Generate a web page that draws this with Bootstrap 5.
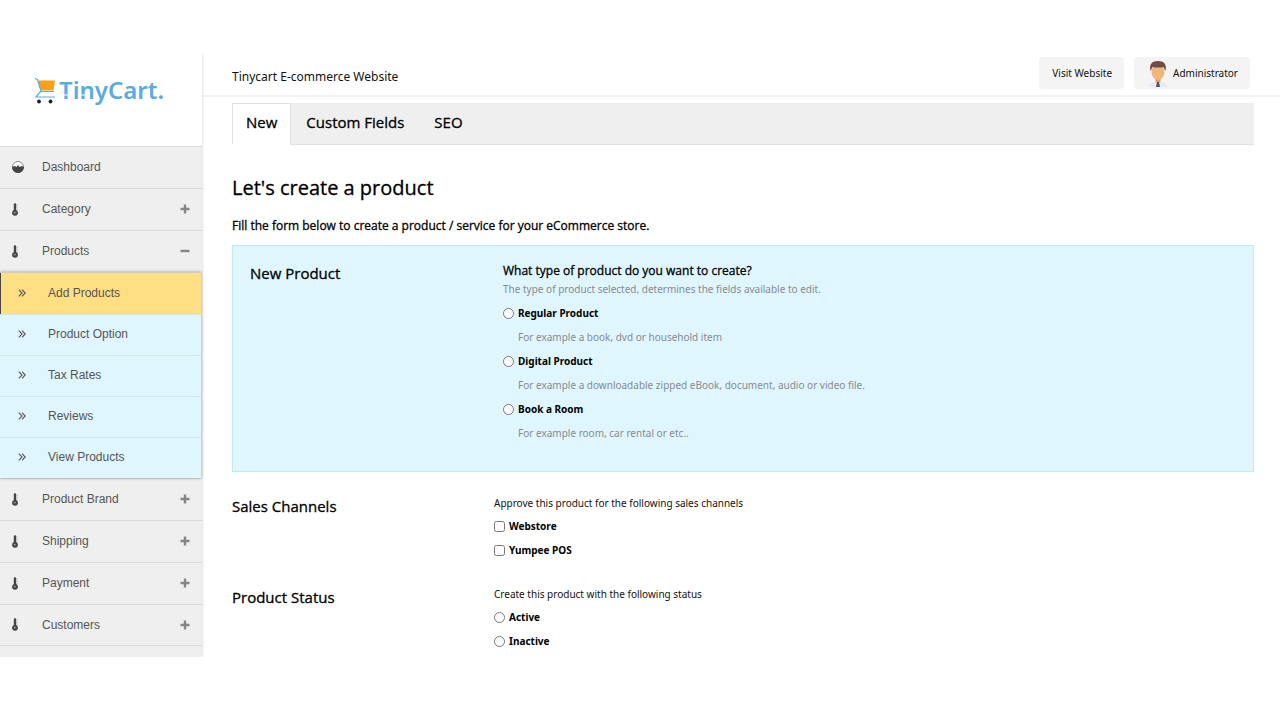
<!DOCTYPE html>
<html lang="en">
<head>
<meta charset="utf-8">
<meta name="viewport" content="width=device-width, initial-scale=1">
<title>Tinycart E-commerce Website</title>
<link href="https://cdn.jsdelivr.net/npm/bootstrap@5.3.0/dist/css/bootstrap.min.css" rel="stylesheet">
<style>
body { font-family: "Noto Sans", "Open Sans", sans-serif; font-size: 10px; line-height: 16px; color: #111; background: #fff; padding: 53px 0 62px; }
.side { width: 202px; flex: none; background: #efefef; font-family: "Liberation Sans", Arial, sans-serif; font-size: 12px; box-shadow: 0 0 3px #ccc; padding-bottom: 11px; clip-path: inset(0 -4px 0 0); }
.brand { height: 93px; background: #fff; padding: 15px 0 0 34px; }
.brand text { font-family: "Noto Sans", sans-serif; font-size: 24px; font-weight: 600; fill: #5aabdf; }
.side a { color: #555; text-decoration: none; }
.entry { height: 42px; border-top: 1px solid #d9d9d9; padding: 0 12px 1px 9px; }
.entry .pic { width: 33px; display: flex; align-items: center; }
.menu-end { border-bottom: 1px solid #d9d9d9; }
.sub { background: #e0f6ff; margin-right: 1px; box-shadow: 0 0 3px #999; position: relative; }
.sub a { height: 41px; border-top: 1px solid #c9e9f3; padding: 0 0 2px 18px; }
.sub a:first-child { border-top-color: #ccc; height: 42px; }
.sub a .pic { width: 30px; display: flex; }
.sub a.now { background: #ffdf84; box-shadow: inset 1px 0 #444; }
.topbar { height: 44px; border-bottom: 2px solid #f3f3f3; padding: 0 30px; font-size: 12px; }
.actions { gap: 10px; }
.btn-soft { background: #f4f4f4; font-size: 10px; line-height: 16px; height: 32px; padding: 0 12px 0 13px; border: 0; border-radius: 4px; color: #111; }
.page-body { padding: 6px 26px 0 30px; }
.tabs { background: #efefef; border-bottom: 1px solid #dee2e6; }
.tabs .nav-link { color: #000; font-size: 15px; line-height: 20px; padding: 8px 14px 12px; border-radius: 0; }
.tabs .nav-link.active { color: #000; padding: 8px 13px 12px; }
h1, h2, .tabs, .lead-in, .ask { font-family: "Open Sans", "Noto Sans", sans-serif; -webkit-text-stroke: .3px; }
h1 { font-size: 20px; font-weight: 400; line-height: 28px; margin: 29px 0 16px; color: #000; }
h2 { font-size: 15px; font-weight: 400; line-height: 22px; margin: 0; color: #000; }
.lead-in { font-size: 12px; line-height: 16px; margin: 0 0 11px; color: #000; }
.panel-new { background: #e0f6ff; border: 1px solid #bfeaf5; padding: 17px 17px 22px; margin-bottom: 3px; }
.panel-new h2 { line-height: 20px; }
.split { display: grid; grid-template-columns: 262px 1fr; }
.panel-new.split { grid-template-columns: 253px 1fr; }
.panel-new p { color: #868b8e; margin: 0 0 8px 15px; }
.panel-new p.tip { margin: 2px 0 8px; }
.ask { font-size: 12px; color: #000; }
.pick { display: flex; align-items: center; gap: 4px; font-weight: 700; color: #000; margin-bottom: 8px; line-height: 16px; }
.pick input { width: 11px; height: 11px; margin: 0; flex: none; }
fieldset { min-width: 0; }
.below { padding-top: 20px; }
.note { margin-bottom: 7px; }
</style>
</head>
<body>
<svg class="d-none">
<symbol id="thermo" viewBox="0 0 12 13"><path d="M6 1.500v8" stroke="#444" stroke-width="2.400" stroke-linecap="round"/><path d="M7.500 2H9M7.500 4.500H9M7.500 7H9" stroke="#bbb" stroke-width=".8"/><circle cx="6" cy="9.800" r="2.900" fill="#444"/><circle cx="5.800" cy="9.600" r=".9" fill="#aaa"/></symbol>
<symbol id="plus" viewBox="0 0 10 10"><path d="M5 .5v9M.5 5h9" stroke="#858585" stroke-width="2.4"/></symbol>
<symbol id="dbl" viewBox="0 0 8 8"><path d="M.8.7 4 4 .8 7.3M4 .7 7.2 4 4 7.3" fill="none" stroke="#555" stroke-width="1.1"/></symbol>
</svg>
<div class="d-flex align-items-stretch">
<nav class="side" aria-label="Main">
<a class="brand d-flex" href="#"><svg width="144" height="46" viewBox="0 -9 144 46"><path d="M4 3.500h17l-1.500 10H6.500z" fill="#f9a01b"/><path d="M1 1.500l2.500 1L7 14l-5 6h19M6.500 14.500H20" fill="none" stroke="#5aabdf" stroke-width="1.200"/><circle cx="5" cy="24.500" r="1.900" fill="#222"/><circle cx="16.500" cy="24.500" r="1.900" fill="#222"/><text x="25" y="22">TinyCart.</text><path d="M29 18h6M46 18h5" stroke="#fff" stroke-width="1.200"/></svg></a>
<a class="entry d-flex align-items-center" href="#"><span class="pic"><svg width="18" height="14" viewBox="0 0 18 14"><circle cx="9" cy="7" r="5.500" fill="#fff" stroke="#888"/><path d="M3 7l3-1 1.500 1L9 5l1.500 2 2-1L15 7a6 6 0 0 1-12 0z" fill="#444"/></svg></span>Dashboard</a>
<a class="entry d-flex align-items-center" href="#"><span class="pic"><svg width="12" height="13"><use href="#thermo"/></svg></span><span class="flex-grow-1">Category</span><svg width="10" height="10"><use href="#plus"/></svg></a>
<a class="entry d-flex align-items-center" href="#"><span class="pic"><svg width="12" height="13"><use href="#thermo"/></svg></span><span class="flex-grow-1">Products</span><svg width="10" height="10"><path d="M.5 5h9" stroke="#858585" stroke-width="2.400"/></svg></a>
<div class="sub">
<a class="now d-flex align-items-center" href="#"><span class="pic"><svg width="8" height="8"><use href="#dbl"/></svg></span>Add Products</a>
<a class="d-flex align-items-center" href="#"><span class="pic"><svg width="8" height="8"><use href="#dbl"/></svg></span>Product Option</a>
<a class="d-flex align-items-center" href="#"><span class="pic"><svg width="8" height="8"><use href="#dbl"/></svg></span>Tax Rates</a>
<a class="d-flex align-items-center" href="#"><span class="pic"><svg width="8" height="8"><use href="#dbl"/></svg></span>Reviews</a>
<a class="d-flex align-items-center" href="#"><span class="pic"><svg width="8" height="8"><use href="#dbl"/></svg></span>View Products</a>
</div>
<a class="entry d-flex align-items-center" href="#"><span class="pic"><svg width="12" height="13"><use href="#thermo"/></svg></span><span class="flex-grow-1">Product Brand</span><svg width="10" height="10"><use href="#plus"/></svg></a>
<a class="entry d-flex align-items-center" href="#"><span class="pic"><svg width="12" height="13"><use href="#thermo"/></svg></span><span class="flex-grow-1">Shipping</span><svg width="10" height="10"><use href="#plus"/></svg></a>
<a class="entry d-flex align-items-center" href="#"><span class="pic"><svg width="12" height="13"><use href="#thermo"/></svg></span><span class="flex-grow-1">Payment</span><svg width="10" height="10"><use href="#plus"/></svg></a>
<a class="entry d-flex align-items-center menu-end" href="#"><span class="pic"><svg width="12" height="13"><use href="#thermo"/></svg></span><span class="flex-grow-1">Customers</span><svg width="10" height="10"><use href="#plus"/></svg></a>
</nav>
<div class="flex-grow-1">
<header class="topbar d-flex align-items-start justify-content-between">
<span class="pt-3">Tinycart E-commerce Website</span>
<div class="d-flex pt-1 actions">
<button type="button" class="btn btn-soft">Visit Website</button>
<button type="button" class="btn btn-soft d-flex align-items-center gap-1"><svg width="22" height="28" viewBox="1 0 22 28"><path d="M2 28q2-4 7-5h6q5 1 7 5z" fill="#e3ebf9"/><path d="M9.500 18h5v5L12 24l-2.500-1z" fill="#dda365"/><ellipse cx="12" cy="13" rx="6.500" ry="8" fill="#efb878"/><path d="M4.500 12C3 5 6 2 12 2s9 3 7.500 10l-2-4q-5.500 1-11 0z" fill="#704a48"/><path d="M11 23h2l1 5h-4z" fill="#4b5568"/></svg>Administrator</button>
</div>
</header>
<main class="page-body">
<ul class="nav nav-tabs tabs">
<li class="nav-item"><a class="nav-link active" aria-current="page" href="#">New</a></li>
<li class="nav-item"><a class="nav-link" href="#">Custom Fields</a></li>
<li class="nav-item"><a class="nav-link" href="#">SEO</a></li>
</ul>
<h1>Let's create a product</h1>
<p class="lead-in">Fill the form below to create a product / service for your eCommerce store.</p>
<form>
<section class="panel-new split">
<h2>New Product</h2>
<fieldset>
<div class="ask">What type of product do you want to create?</div>
<p class="tip">The type of product selected, determines the fields available to edit.</p>
<label class="pick"><input type="radio" name="kind">Regular Product</label>
<p>For example a book, dvd or household item</p>
<label class="pick"><input type="radio" name="kind">Digital Product</label>
<p>For example a downloadable zipped eBook, document, audio or video file.</p>
<label class="pick"><input type="radio" name="kind">Book a Room</label>
<p>For example room, car rental or etc..</p>
</fieldset>
</section>
<section class="split below">
<h2>Sales Channels</h2>
<fieldset>
<div class="note">Approve this product for the following sales channels</div>
<label class="pick"><input type="checkbox">Webstore</label>
<label class="pick"><input type="checkbox">Yumpee POS</label>
</fieldset>
</section>
<section class="split below">
<h2>Product Status</h2>
<fieldset>
<div class="note">Create this product with the following status</div>
<label class="pick"><input type="radio" name="status">Active</label>
<label class="pick"><input type="radio" name="status">Inactive</label>
</fieldset>
</section>
</form>
</main>
</div>
</div>
<script src="https://cdn.jsdelivr.net/npm/bootstrap@5.3.0/dist/js/bootstrap.bundle.min.js"></script>
</body>
</html>
